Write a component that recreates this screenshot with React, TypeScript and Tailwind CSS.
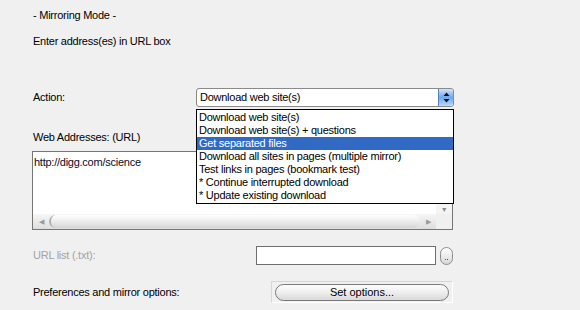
import React from "react";

const options = [
  "Download web site(s)",
  "Download web site(s) + questions",
  "Get separated files",
  "Download all sites in pages (multiple mirror)",
  "Test links in pages (bookmark test)",
  "* Continue interrupted download",
  "* Update existing download",
];

const SelectArrows = () => (
  <svg width="7" height="11" viewBox="0 0 7 11">
    <path d="M3.5 0.5 L6.5 4 H0.5 Z" fill="#111" />
    <path d="M3.5 10.5 L6.5 7 H0.5 Z" fill="#111" />
  </svg>
);

const App = () => {
  return (
    <div className="relative w-[580px] h-[310px] overflow-hidden bg-[#f0f0f0] text-[11px] leading-[13px] tracking-[-0.25px] text-black font-['Liberation_Sans',Arial,sans-serif]">
      <div className="pl-[33px] pt-[9px]">
        <p>- Mirroring Mode -</p>
        <p className="mt-[13px]">Enter address(es) in URL box</p>

        {/* action */}
        <div className="mt-[40px] flex items-center">
          <span className="w-[163px]">Action:</span>
          <div className="flex w-[258px] h-[19px] rounded-[3px] border border-[#8a8a8a] bg-white">
            <span className="flex-1 pl-[3px] leading-[17px]">Download web site(s)</span>
            <div className="flex w-[15px] items-center justify-center rounded-r-[3px] border-l border-[#5b7fbf] bg-gradient-to-b from-[#cfe3fb] via-[#6ea6ef] to-[#b9dafc]">
              <SelectArrows />
            </div>
          </div>
        </div>

        <p className="mt-[24px]">Web Addresses: (URL)</p>

        {/* url box */}
        <div className="mt-[7px] -ml-px flex flex-col w-[421px] h-[79px] border border-[#767676] bg-white">
          <div className="flex flex-1">
            <div className="flex-1 pl-[1px] pt-[4px] text-[#0a0a2a]">http://digg.com/science</div>
            <div className="flex w-[16px] flex-col justify-end bg-[#f4f4f4]">
              <div className="flex h-[11px] items-center justify-center border-t border-[#d8d8d8] text-[7px] text-[#8a8a8a]">▼</div>
            </div>
          </div>
          <div className="flex h-[15px]">
            <div className="flex flex-1 items-center bg-gradient-to-b from-[#f6f6f6] to-[#dedede]">
              <div className="flex w-[16px] items-center justify-center text-[7px] text-[#9a9a9a]">◀</div>
              <div className="h-[13px] flex-1 rounded-full border-l-2 border-[#b0b0b0] bg-gradient-to-b from-[#ffffff] via-[#ececec] to-[#d6d6d6]" />
              <div className="flex w-[16px] items-center justify-center text-[7px] text-[#9a9a9a]">▶</div>
            </div>
            <div className="w-[16px] bg-[#f0f0f0]" />
          </div>
        </div>

        {/* url list */}
        <div className="mt-[16px] flex items-center">
          <span className="w-[223px] text-[#a3a3a3]">URL list (.txt):</span>
          <div className="w-[180px] h-[19px] border border-[#6e6e6e] bg-white" />
          <div className="ml-[4px] flex w-[13px] h-[18px] items-end justify-center rounded-full border border-[#8c8c8c] bg-gradient-to-b from-[#ffffff] to-[#d8d8d8] pb-[4px]">
            <span className="flex gap-[1px]">
              <span className="h-[1px] w-[1px] bg-[#d03040]" />
              <span className="h-[1px] w-[1px] bg-[#3050d0]" />
            </span>
          </div>
        </div>

        {/* preferences */}
        <div className="mt-[16px] flex items-center">
          <span className="w-[238px]">Preferences and mirror options:</span>
          <div className="flex w-[182px] h-[22px] items-center justify-center border border-[#d6d6d6] border-b-white border-r-white px-[3px]">
            <button className="h-[17px] w-full rounded-full border border-[#7a7a7a] bg-gradient-to-b from-[#fdfdfd] via-[#eeeeee] to-[#d9d9d9] text-[11px] leading-[15px] tracking-normal">
              Set options...
            </button>
          </div>
        </div>
      </div>

      {/* open dropdown list */}
      <div className="absolute left-[196px] top-[109px] w-[258px] border border-black bg-white py-px">
        {options.map((o, i) => (
          <div
            key={o}
            className={
              i === 2
                ? "h-[13px] pl-[2px] leading-[13px] bg-[#316ac5] text-white"
                : "h-[13px] pl-[2px] leading-[13px]"
            }
          >
            {o}
          </div>
        ))}
      </div>
    </div>
  );
};

export default App;
